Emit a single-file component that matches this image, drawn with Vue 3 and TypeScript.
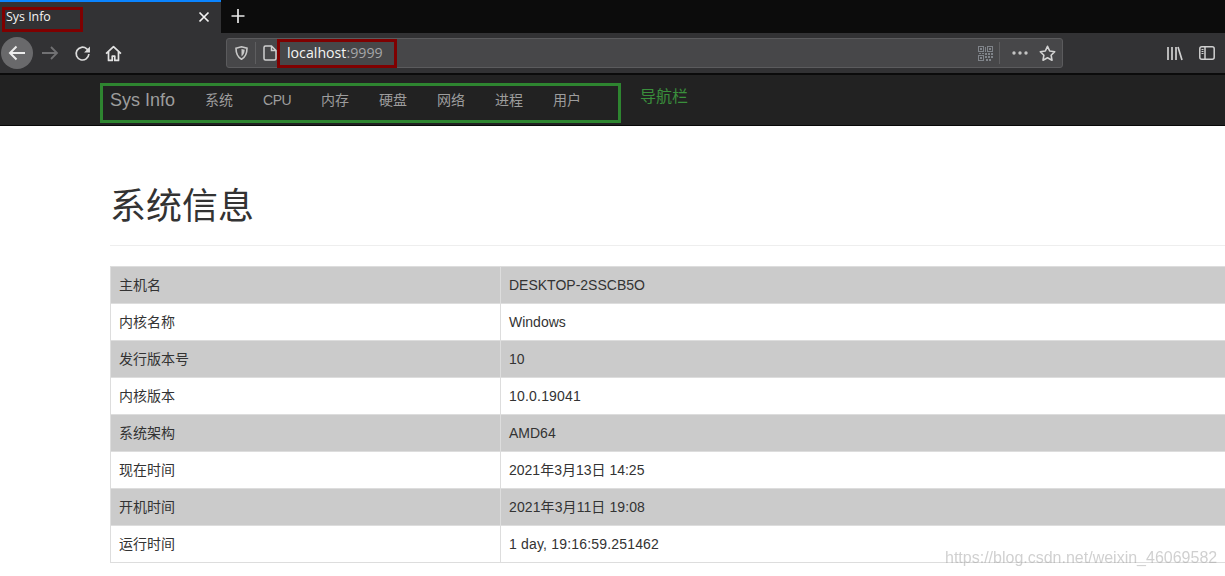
<script setup lang="ts">
const navItems: string[] = ['系统', 'CPU', '内存', '硬盘', '网络', '进程', '用户']
interface Row {
  key: string
  value: string
  spacing?: string
}
const rows: Row[] = [
  { key: '主机名', value: 'DESKTOP-2SSCB5O' },
  { key: '内核名称', value: 'Windows' },
  { key: '发行版本号', value: '10' },
  { key: '内核版本', value: '10.0.19041', spacing: '0.2px' },
  { key: '系统架构', value: 'AMD64' },
  { key: '现在时间', value: '2021年3月13日 14:25' },
  { key: '开机时间', value: '2021年3月11日 19:08', spacing: '0.1px' },
  { key: '运行时间', value: '1 day, 19:16:59.251462', spacing: '0.18px' },
]
</script>

<template>
  <div class="page">
    <div class="tabstrip">
      <div class="tab">
        <span class="tab-title">Sys Info</span>
        <svg class="tab-close" width="12" height="12" viewBox="0 0 12 12"><path d="M1.500 1.500l9 9M10.500 1.500l-9 9" stroke="#f4f4f4" stroke-width="1.700" fill="none"/></svg>
      </div>
      <svg class="new-tab" width="16" height="16" viewBox="0 0 16 16"><path d="M8 1v14M1.500 8h13" stroke="#e8e8e8" stroke-width="1.700" fill="none"/></svg>
    </div>

    <div class="toolbar">
      <div class="back">
        <svg width="20" height="20" viewBox="0 0 20 20"><path d="M18 10H3M9.500 3.500L3 10l6.500 6.500" stroke="#ededed" stroke-width="2" fill="none"/></svg>
      </div>
      <svg class="forward" width="18" height="18" viewBox="0 0 18 18"><path d="M1 9h15M10 3l6 6-6 6" stroke="#717173" stroke-width="1.800" fill="none"/></svg>
      <svg class="reload" width="17" height="17" viewBox="0 0 16 16"><path d="M14 8.500A6 6 0 1 1 12 3.600L14 6" stroke="#dcdcdc" stroke-width="1.600" fill="none"/><path d="M15 1.500v5.500H9.500z" fill="#dcdcdc"/></svg>
      <svg class="home" width="17" height="17" viewBox="0 0 16 16"><path d="M1 8.200L8 1.600l7 6.600M3.300 6.500v8h3.500v-4h2.400v4h3.500v-8" stroke="#e2e2e2" stroke-width="1.600" fill="none" stroke-linejoin="round"/></svg>

      <div class="urlbar">
        <svg class="shield" width="13" height="14" viewBox="0 0 13 14"><path d="M1 2.200L6.500.8 12 2.200c0 5-1.500 8.800-5.500 11C2.500 11 1 7.200 1 2.200z" stroke="#c8c8c8" stroke-width="1.600" fill="none"/><path d="M6.500 3v7.500C8.500 9 9.500 7 9.700 3.700z" fill="#c8c8c8"/></svg>
        <span class="url-sep first"></span>
        <svg class="doc" width="14" height="16" viewBox="0 0 14 16"><path d="M1 2.500A1.500 1.500 0 0 1 2.500 1H8.500L13 5.500V13.500A1.500 1.500 0 0 1 11.500 15H2.500A1.500 1.500 0 0 1 1 13.500zM8.500 1V5.500H13" stroke="#d0d0d0" stroke-width="1.500" fill="none"/></svg>
        <span class="url"><span class="host">localhost</span><span class="port">:9999</span></span>
        <svg class="qr" width="15" height="15" viewBox="0 0 15 15"><g fill="none" stroke="#80848a" stroke-width="1"><rect x=".5" y=".5" width="5" height="5"/><rect x="9.500" y=".5" width="5" height="5"/><rect x=".5" y="9.500" width="5" height="5"/></g><g fill="#80848a"><rect x="2" y="2" width="2" height="2"/><rect x="11" y="2" width="2" height="2"/><rect x="2" y="11" width="2" height="2"/><rect x="7" y="1" width="1" height="5"/><rect x="7" y="7" width="2" height="2"/><rect x="10" y="7" width="2" height="2"/><rect x="13" y="7" width="2" height="2"/><rect x="1" y="7" width="2" height="1"/><rect x="4" y="7" width="2" height="1"/><rect x="7" y="10" width="2" height="2"/><rect x="10" y="10" width="2" height="2"/><rect x="13" y="10" width="2" height="2"/><rect x="8" y="13" width="2" height="2"/><rect x="11" y="13" width="2" height="2"/></g></svg>
        <span class="url-sep second"></span>
        <svg class="dots" width="16" height="4" viewBox="0 0 16 4"><circle cx="2" cy="2" r="1.700" fill="#c4c4c4"/><circle cx="8" cy="2" r="1.700" fill="#c4c4c4"/><circle cx="14" cy="2" r="1.700" fill="#c4c4c4"/></svg>
        <svg class="star" width="17" height="17" viewBox="0 0 17 17"><path d="M8.500 1.300l2.200 4.700 5 .7-3.600 3.500.9 5-4.500-2.400L4 15.200l.9-5L1.300 6.700l5-.7z" stroke="#d4d4d4" stroke-width="1.600" fill="none" stroke-linejoin="round"/></svg>
      </div>

      <svg class="library" width="16" height="15" viewBox="0 0 16 15"><path d="M1 1v13M5 1v13M9 1v13M11 1l4 13" stroke="#d0d0d0" stroke-width="1.700" fill="none"/></svg>
      <svg class="sidebar" width="16" height="14" viewBox="0 0 16 14"><rect x=".8" y=".8" width="14.400" height="12.400" rx="2" stroke="#d0d0d0" stroke-width="1.500" fill="none"/><path d="M6 1v12" stroke="#d0d0d0" stroke-width="1.500"/><path d="M2.500 3.500h2M2.500 5.500h2M2.500 7.500h2" stroke="#d0d0d0" stroke-width="1"/></svg>
    </div>

    <nav class="navbar">
      <span class="brand">Sys Info</span>
      <a v-for="item in navItems" :key="item" class="nav-link">{{ item }}</a>
    </nav>

    <main class="content">
      <h1 class="title">系统信息</h1>
      <table class="info">
        <tbody>
          <tr v-for="row in rows" :key="row.key">
            <td class="key">{{ row.key }}</td>
            <td :style="{ letterSpacing: row.spacing }">{{ row.value }}</td>
          </tr>
        </tbody>
      </table>
    </main>

    <div class="mark mark-tab"></div>
    <div class="mark mark-url"></div>
    <div class="mark mark-nav"></div>
    <span class="nav-note">导航栏</span>
    <span class="watermark">https://blog.csdn.net/weixin_46069582</span>
  </div>
</template>

<style>
html, body { margin: 0; background: #fff; overflow: hidden; }
</style>

<style scoped>
.page {
  position: relative;
  width: 1225px;
  height: 576px;
  overflow: hidden;
  background: #fff;
  font-family: "Liberation Sans", "Noto Sans CJK SC", sans-serif;
  font-size: 14px;
  color: #333;
}
.tabstrip {
  display: flex;
  align-items: center;
  height: 33px;
  background: #0c0c0c;
}
.tab {
  display: flex;
  align-items: center;
  justify-content: space-between;
  box-sizing: border-box;
  width: 221px;
  height: 33px;
  padding: 0 11px 2px 6px;
  background: #323234;
  border-top: 2px solid #0a84ff;
}
.tab-title {
  font-family: "Open Sans", sans-serif;
  font-size: 12.400px;
  color: #f6f6f6;
}
.new-tab { margin: 0 0 1px 9px; }
.toolbar {
  display: flex;
  align-items: center;
  box-sizing: border-box;
  height: 40px;
  background: #323234;
}
.back {
  display: flex;
  align-items: center;
  justify-content: center;
  flex: none;
  width: 32px;
  height: 32px;
  margin-left: 1px;
  border-radius: 50%;
  background: #69696b;
}
.forward { margin-left: 8px; flex: none; }
.reload { margin-left: 15px; flex: none; }
.home { margin-left: 14px; flex: none; }
.urlbar {
  display: flex;
  align-items: center;
  box-sizing: border-box;
  flex: none;
  width: 837px;
  height: 30px;
  margin-left: 104px;
  background: #474749;
  border: 1px solid #5b5b5d;
  border-radius: 3px;
}
.shield { margin-left: 8px; flex: none; }
.url-sep { flex: none; width: 1px; height: 22px; background: #5e5e60; }
.url-sep.first { margin-left: 7px; }
.doc { margin-left: 7px; flex: none; }
.url {
  flex: 1;
  margin: 0 0 2px 10px;
  font-family: "Open Sans", sans-serif;
  font-size: 14.200px;
}
.host { color: #f4f4f4; }
.port { color: #a6a6a8; }
.qr { flex: none; }
.url-sep.second { margin-left: 6px; }
.dots { margin-left: 12px; flex: none; }
.star { margin-left: 11px; margin-right: 6px; flex: none; }
.library { margin-left: 104px; flex: none; }
.sidebar { margin-left: 16px; flex: none; }
.navbar {
  display: flex;
  align-items: center;
  height: 50px;
  padding-left: 95px;
  background: #222;
  border-top: 2px solid #0b0b0b;
  border-bottom: 1px solid #080808;
}
.brand {
  padding: 0 15px;
  font-size: 18px;
  color: #9d9d9d;
}
.nav-link {
  flex: none;
  width: 28px;
  padding: 0 15px 2px;
  white-space: nowrap;
  color: #9d9d9d;
}
.nav-link:nth-of-type(2) {
  padding-bottom: 0;
  letter-spacing: -0.5px;
}
.content { padding-left: 110px; }
.title {
  box-sizing: border-box;
  width: 1170px;
  margin: 0 0 20px;
  padding: 61px 0 18px;
  border-bottom: 1px solid #eee;
  font-size: 36px;
  font-weight: 400;
  line-height: 40px;
  color: #333;
}
.info {
  width: 1170px;
  border-collapse: collapse;
  table-layout: fixed;
}
.info td {
  box-sizing: border-box;
  height: 37px;
  padding: 8px;
  border: 1px solid #ddd;
  line-height: 20px;
}
.info td.key { width: 390px; }
.info tr:nth-child(odd) td { background: #cbcbcb; }
.mark {
  position: absolute;
  box-sizing: border-box;
  border: 3px solid #7f0000;
}
.mark-tab { left: 2px; top: 7px; width: 81px; height: 25px; }
.mark-url { left: 277px; top: 39px; width: 120px; height: 29px; }
.mark-nav { left: 100px; top: 83px; width: 521px; height: 40px; border-color: #2e8530; }
.nav-note {
  position: absolute;
  left: 640px;
  top: 83px;
  font-size: 16px;
  color: #3a8f3c;
}
.watermark {
  position: absolute;
  left: 945px;
  top: 549px;
  font-size: 16px;
  color: rgba(150, 150, 150, 0.45);
  filter: blur(0.5px);
  white-space: nowrap;
}
</style>
